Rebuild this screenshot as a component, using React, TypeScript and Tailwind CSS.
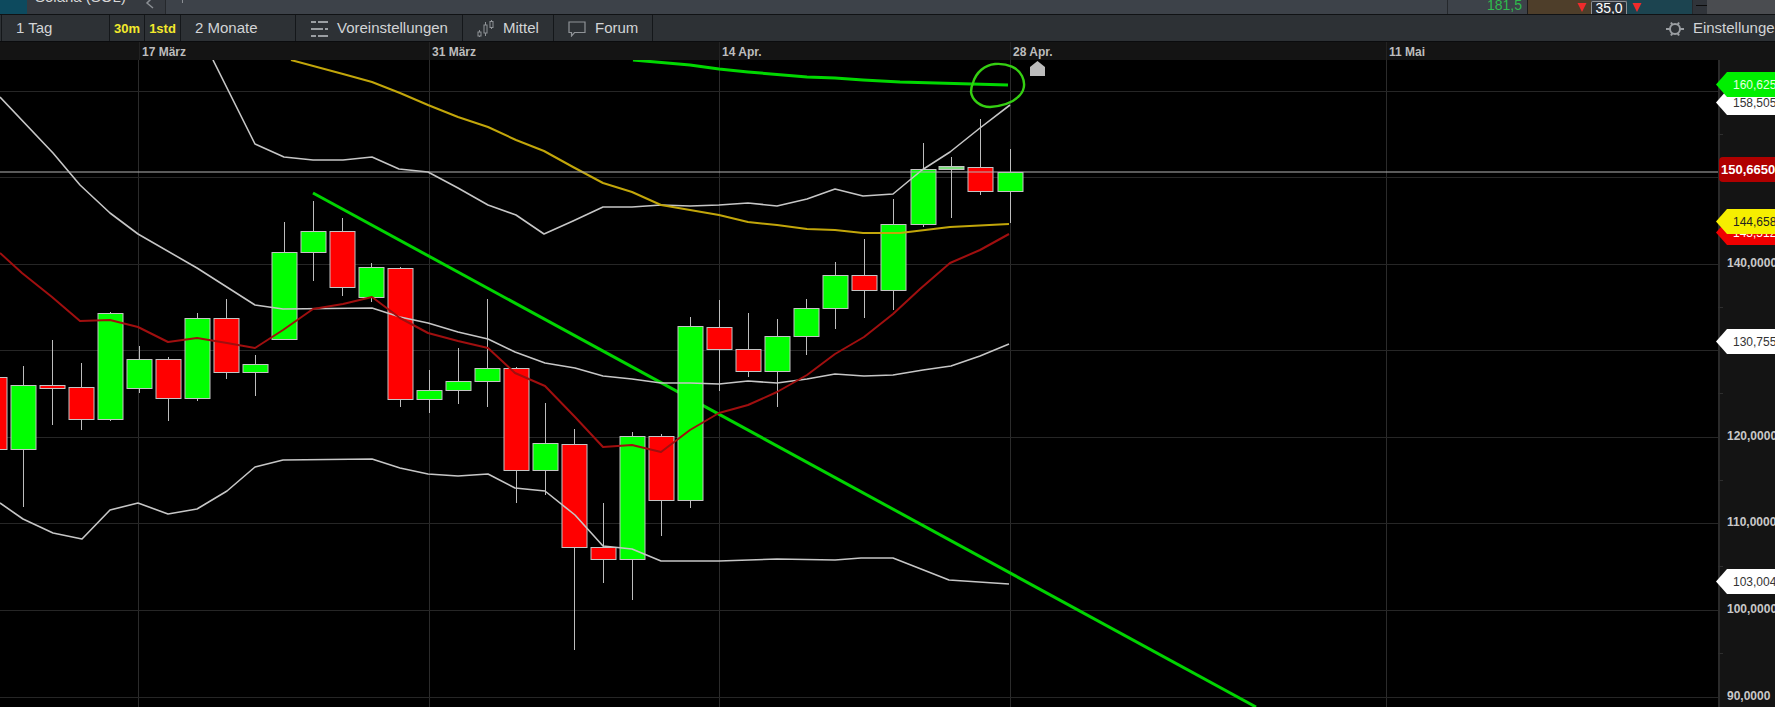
const candles: [number, number, number, number, number, string][] = [
  [-6, 350, 377, 449, 449, 'r'],
  [23, 366, 385, 449, 507, 'g'],
  [52, 340, 385, 388, 425, 'r'],
  [81, 363, 387, 419, 430, 'r'],
  [110, 312, 313, 419, 421, 'g'],
  [139, 346, 359, 388, 393, 'g'],
  [168, 357, 359, 398, 421, 'r'],
  [197, 313, 318, 398, 401, 'g'],
  [226, 299, 318, 372, 379, 'r'],
  [255, 355, 364, 372, 396, 'g'],
  [284, 222, 252, 339, 339, 'g'],
  [313, 201, 231, 252, 281, 'g'],
  [342, 218, 231, 287, 296, 'r'],
  [371, 263, 267, 297, 302, 'g'],
  [400, 267, 268, 399, 407, 'r'],
  [429, 370, 390, 399, 413, 'g'],
  [458, 348, 381, 390, 404, 'g'],
  [487, 299, 368, 381, 407, 'g'],
  [516, 367, 368, 470, 503, 'r'],
  [545, 403, 443, 470, 495, 'g'],
  [574, 429, 444, 547, 650, 'r'],
  [603, 503, 547, 559, 583, 'r'],
  [632, 432, 436, 559, 600, 'g'],
  [661, 434, 436, 500, 536, 'r'],
  [690, 317, 326, 500, 508, 'g'],
  [719, 300, 327, 349, 391, 'r'],
  [748, 313, 349, 371, 377, 'r'],
  [777, 319, 336, 371, 407, 'g'],
  [806, 299, 308, 336, 355, 'g'],
  [835, 262, 275, 308, 329, 'g'],
  [864, 239, 275, 290, 318, 'r'],
  [893, 199, 224, 290, 310, 'g'],
  [923, 143, 169, 224, 227, 'g'],
  [951, 157, 166, 169, 218, 'd'],
  [980, 119, 167, 191, 195, 'r'],
  [1010, 149, 172, 191, 223, 'g'],
]

const midBand = '0,97 53,153 80,185 110,213 138,234 197,268 255,305 283,309 372,308 400,317 428,323 458,332 488,339 515,352 545,363 575,368 603,376 632,379 661,383 690,383 719,384 748,381 777,383 807,379 835,374 864,376 893,375 923,370 951,366 980,356 1009,344'
const upperBand = '213,60 255,144 284,157 313,160 343,160 372,157 399,169 428,172 458,188 488,205 516,215 544,234 573,221 603,207 632,207 661,205 690,206 719,205 748,203 777,206 807,199 835,189 863,196 893,194 922,170 950,152 980,128 1010,105'
const lowerBand = '0,503 23,519 53,533 82,539 110,510 138,503 168,514 197,509 227,491 255,467 283,460 372,459 400,468 428,474 458,476 488,474 515,488 545,491 575,515 603,546 632,549 661,561 719,561 777,559 835,560 861,558 893,558 949,580 1009,584'
const redAvg = '0,253 22,273 52,297 80,321 110,320 138,327 168,342 197,338 227,343 255,348 283,330 313,309 343,304 372,297 400,318 428,333 458,341 488,348 515,373 545,386 575,417 603,447 632,445 661,452 690,430 719,413 748,405 777,392 807,375 835,354 864,337 893,314 920,289 950,263 980,250 1009,234'
const yellowAvg = '291,60 343,74 372,82 400,93 428,105 458,117 488,127 516,140 544,151 573,167 603,183 632,192 661,205 719,215 748,222 777,225 807,229 835,230 863,233 900,233 950,227 1009,224'
const greenAvg = '633,60 690,65 719,69 748,72 807,77 835,78 863,80 900,82 1008,85'

const gridX = [138.5, 429.5, 719.5, 1010.5, 1386.5]
const gridY = [91.5, 177.5, 264.5, 350.5, 437.5, 523.5, 610.5, 697.5]
const tickY = [134, 220, 307, 393, 480, 566, 653]

const dates = [
  { label: '17 März', pos: 'left-[139px]' },
  { label: '31 März', pos: 'left-[429px]' },
  { label: '14 Apr.', pos: 'left-[719px]' },
  { label: '28 Apr.', pos: 'left-[1010px]' },
  { label: '11 Mai', pos: 'left-[1386px]' },
]

// 160, 150 and 130 sit under the value tags in the picture, so they are left out
const prices = [
  { label: '140,0000', pos: 'top-[196px]' },
  { label: '120,0000', pos: 'top-[369px]' },
  { label: '110,0000', pos: 'top-[455px]' },
  { label: '100,0000', pos: 'top-[542px]' },
  { label: '90,0000', pos: 'top-[629px]' },
]

const tags = [
  { label: '158,505', pos: 'top-[30px]', color: 'bg-white text-[#333]' },
  { label: '160,625', pos: 'top-[12px]', color: 'bg-[#00f000] text-[#e4ffe4]' },
  { label: '143,512', pos: 'top-[160px]', color: 'bg-[#f00000] text-white' },
  { label: '144,658', pos: 'top-[149px]', color: 'bg-[#f6ee00] text-[#222]' },
  { label: '130,755', pos: 'top-[269px]', color: 'bg-white text-[#333]' },
  { label: '103,004', pos: 'top-[509px]', color: 'bg-white text-[#333]' },
]

function ToolButton({ className, children }: { className: string; children: React.ReactNode }) {
  return (
    <div className={`flex h-full shrink-0 items-center border-r border-[#14171a] pt-[1px] ${className}`}>
      {children}
    </div>
  )
}

function Chart() {
  return (
    <svg viewBox="0 60 1718 647" className="block h-[647px] w-[1718px]">
      {gridX.map((x) => (
        <line key={x} x1={x} x2={x} y1={60} y2={707} stroke="#2b2b2b" />
      ))}
      {gridY.map((y) => (
        <line key={y} x1={0} x2={1718} y1={y} y2={y} stroke="#262626" />
      ))}

      <line x1={313} y1={193} x2={1256} y2={707} stroke="#00d400" strokeWidth={3} />

      {candles.map(([x, wt, bt, bb, wb, kind]) => (
        <g key={x}>
          <line x1={x + 0.5} x2={x + 0.5} y1={wt} y2={wb} stroke="#bdbdbd" />
          <rect
            x={x - 12}
            y={bt + 0.5}
            width={25}
            height={bb - bt}
            fill={kind === 'g' ? '#00ff00' : kind === 'r' ? '#ff0000' : '#7fe07f'}
            stroke="#c4c4c4"
          />
        </g>
      ))}

      <g fill="none" strokeLinejoin="round" strokeWidth={1.6}>
        <polyline points={midBand} stroke="#c6c6c6" />
        <polyline points={upperBand} stroke="#c6c6c6" />
        <polyline points={lowerBand} stroke="#c6c6c6" />
      </g>
      <g fill="none" strokeLinejoin="round" strokeWidth={2}>
        <polyline points={yellowAvg} stroke="#c2a60a" />
        <polyline points={redAvg} stroke="#a00f0f" />
      </g>
      <polyline points={greenAvg} fill="none" stroke="#00d800" strokeWidth={3} />

      <line x1={0} x2={1718} y1={172} y2={172} stroke="#b4b4b4" strokeWidth={1.2} />

      <path
        d="M973 83 C976 72 985 65 995 64 C1008 63 1018 68 1022 76 C1026 84 1024 92 1018 97 C1012 103 1000 106 990 107 C980 107 972 100 971 92 C971 88 972 85 973 83 Z"
        fill="none"
        stroke="#35cf12"
        strokeWidth={2.4}
      />
      <polygon points="1030,67 1037.5,61 1045,67 1045,76 1030,76" fill="#bcbcbc" />
    </svg>
  )
}

export default function App() {
  return (
    <div className="flex h-[707px] w-[1775px] flex-col overflow-hidden bg-black font-['Liberation_Sans',Arial,sans-serif]">
      {/* instrument strip, cut off by the screenshot */}
      <div className="flex h-[14px] shrink-0 overflow-hidden bg-[#3d4249]">
        <div className="flex w-[166px] shrink-0 border-r border-[#25282c] bg-[#363a40]">
          <div className="h-full w-[27px] bg-[#0d4a5e]" />
          <span className="ml-[8px] -mt-[11px] text-[15px] leading-[15px] whitespace-nowrap text-[#d8d8d8]">
            Solana (SOL)
          </span>
          <svg viewBox="0 0 10 14" className="ml-[19px] h-[14px] w-[10px]">
            <path d="M8 -3 L2 3 L8 8" fill="none" stroke="#8b8f94" strokeWidth={1.5} />
          </svg>
        </div>
        <div className="ml-[16px] h-[3px] w-[1px] bg-[#8b8f94]" />
        <div className="flex-1" />
        <div className="flex w-[80px] shrink-0 justify-end border-l border-[#25282c] pr-[5px]">
          <span className="-mt-[2px] text-[14px] leading-[14px] text-[#2fbb4d]">181,5</span>
        </div>
        <div className="flex w-[64px] shrink-0 justify-end border-l border-[#1c1c1c] bg-[#4e3e2a] pr-[4px]">
          <svg viewBox="0 0 10 10" className="mt-[3px] h-[9px] w-[10px]">
            <polygon points="0,0 10,0 5,10" fill="#f02b2b" />
          </svg>
        </div>
        <div className="mt-[1px] flex h-[13px] w-[36px] shrink-0 justify-center rounded-t-[2px] border border-b-0 border-[#8d9095] bg-[#2a2f36] text-[14px] leading-[12px] text-white">
          35,0
        </div>
        <div className="flex w-[65px] shrink-0 bg-[#1c4450] pl-[5px]">
          <svg viewBox="0 0 10 10" className="mt-[3px] h-[9px] w-[10px]">
            <polygon points="0,0 10,0 5,10" fill="#f02b2b" />
          </svg>
        </div>
        <div className="flex w-[15px] shrink-0 items-start justify-end border-l border-[#25282c] bg-[#30343a] pt-[5px]">
          <div className="h-[1px] w-[11px] bg-[#0c0c0c]" />
        </div>
        <div className="w-[68px] shrink-0 bg-[#4a4c50]" />
      </div>
      <div className="h-[1px] shrink-0 bg-[#101214]" />

      {/* toolbar */}
      <div className="flex h-[27px] shrink-0 items-center overflow-hidden border-b border-[#0b0c0e] bg-[#2d3135] text-[15px] text-[#d2d4d6]">
        <ToolButton className="w-[2px]">{null}</ToolButton>
        <ToolButton className="w-[108px] pl-[14px]">1 Tag</ToolButton>
        <ToolButton className="w-[35px] justify-center text-[13px] font-bold text-[#f4e92c]">30m</ToolButton>
        <ToolButton className="w-[36px] justify-center text-[13px] font-bold text-[#f4e92c]">1std</ToolButton>
        <ToolButton className="w-[115px] pl-[14px]">2 Monate</ToolButton>
        <ToolButton className="w-[167px] gap-[8px] pl-[14px]">
          <svg viewBox="0 0 19 18" className="h-[18px] w-[19px]" stroke="#9a9ea2" strokeWidth={2}>
            <path d="M1 2h5M8 2h10M1 9h12M15 9h3M1 16h5M8 16h10" fill="none" />
          </svg>
          Voreinstellungen
        </ToolButton>
        <ToolButton className="w-[91px] gap-[8px] pl-[14px]">
          <svg viewBox="0 0 18 18" className="h-[18px] w-[18px]" stroke="#8f9397" fill="none">
            <path d="M2.5 10v7M8.5 2v14M14.5 0v9" />
            <rect x="1" y="12" width="3" height="4" fill="#2d3135" />
            <rect x="7" y="5" width="3" height="8" fill="#2d3135" />
            <rect x="13" y="1.5" width="3" height="6" fill="#2d3135" />
          </svg>
          Mittel
        </ToolButton>
        <ToolButton className="w-[99px] gap-[9px] pl-[14px]">
          <svg viewBox="0 0 18 16" className="h-[16px] w-[18px]" stroke="#8f9397" strokeWidth={1.2} fill="none">
            <path d="M1 1h16v10.5H6.5L3.5 15v-3.5H1z" />
          </svg>
          Forum
        </ToolButton>
        <div className="-mr-[8px] ml-auto flex shrink-0 items-center gap-[9px] pt-[1px]">
          <svg viewBox="0 0 18 18" className="h-[18px] w-[18px]" stroke="#9a9ea2" strokeWidth={2} fill="none">
            <circle cx="9" cy="9" r="5" />
            <path d="M0 9h4M14 9h4M5 2.5 6.5 5M13 2.5 11.5 5M5 15.5 6.5 13M13 15.5 11.5 13" />
          </svg>
          <span className="whitespace-nowrap">Einstellungen</span>
        </div>
      </div>

      {/* date axis */}
      <div className="relative h-[18px] shrink-0 bg-[#141414] text-[12px] font-bold text-[#bdbdbd]">
        {dates.map((d) => (
          <div key={d.label} className={`absolute top-0 flex h-full items-center border-l border-[#222] pt-[1px] pl-[2px] ${d.pos}`}>
            {d.label}
          </div>
        ))}
      </div>

      <div className="flex min-h-0 flex-1">
        <Chart />
        {/* price axis */}
        <div className="relative flex-1 border-l-2 border-[#2a2a2a] bg-[#141414] text-[12px] leading-[14px]">
          {tickY.map((y) => (
            <div key={y} className="absolute -left-[2px] h-[1px] w-[5px] bg-[#2e2e2e]" style={{ top: y - 60 }} />
          ))}
          {prices.map((p) => (
            <div key={p.label} className={`absolute left-[7px] font-bold whitespace-nowrap text-[#c8c8c8] ${p.pos}`}>
              {p.label}
            </div>
          ))}
          {tags.map((t) => (
            <div
              key={t.label}
              className={`absolute -left-[4px] flex h-[25px] w-[61px] items-center pl-[17px] whitespace-nowrap [clip-path:polygon(0_50%,11px_0,100%_0,100%_100%,11px_100%)] ${t.pos} ${t.color}`}
            >
              {t.label}
            </div>
          ))}
          <div className="absolute -left-[1px] top-[97px] flex h-[25px] w-[59px] items-center rounded-l-[4px] bg-[#b00000] pl-[2px] text-[13px] font-bold whitespace-nowrap text-white">
            150,6650
          </div>
        </div>
      </div>
    </div>
  )
}
